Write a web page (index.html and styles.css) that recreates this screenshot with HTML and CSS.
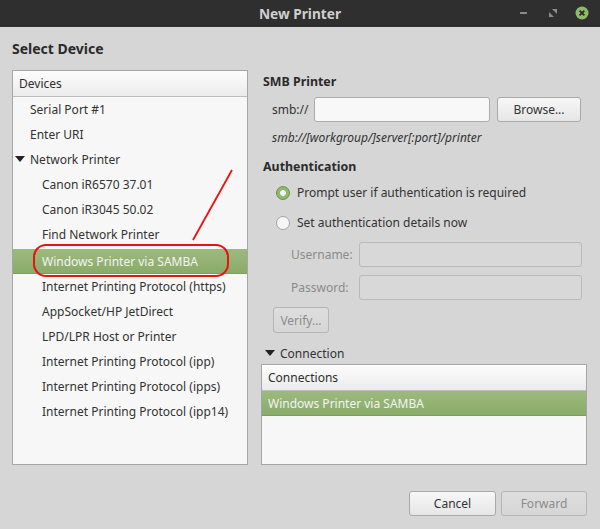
FILE: index.html
```html
<!DOCTYPE html>
<html lang="en">
  <head>
    <meta charset="UTF-8" />
    <title>New Printer</title>
    <link rel="stylesheet" href="styles.css">
  </head>
  <body>
    <div class="window">
      <div class="titlebar">
        <span class="title">New Printer</span>
        <div class="controls">
          <svg class="btn-min" width="10" height="10" viewBox="0 0 10 10">
            <rect x="1" y="4" width="7" height="2" fill="#8a8a8a" />
          </svg>
          <svg class="btn-max" width="10" height="10" viewBox="0 0 10 10">
            <polygon points="4,1 9,1 9,6" fill="#8a8a8a" />
            <polygon points="1,4 1,9 6,9" fill="#8a8a8a" />
          </svg>
          <svg class="btn-close" width="14" height="14" viewBox="0 0 14 14">
            <circle cx="7" cy="7" r="6.5" fill="#8fbb69" />
            <path d="M4.6 4.6 L9.4 9.4 M9.4 4.6 L4.6 9.4" stroke="#2b2b2b" stroke-width="1.8" />
          </svg>
        </div>
      </div>

      <div class="content">
        <h1 class="page-title">Select Device</h1>

        <div class="main">
          <div class="devices">
            <div class="list-header">Devices</div>
            <ul class="device-list">
              <li class="item">Serial Port #1</li>
              <li class="item">Enter URI</li>
              <li class="item"><span class="arrow"></span>Network Printer</li>
              <li class="item child">Canon iR6570 37.01</li>
              <li class="item child">Canon iR3045 50.02</li>
              <li class="item child find">Find Network Printer</li>
              <li class="item child selected">Windows Printer via SAMBA</li>
              <li class="item child">Internet Printing Protocol (https)</li>
              <li class="item child">AppSocket/HP JetDirect</li>
              <li class="item child">LPD/LPR Host or Printer</li>
              <li class="item child">Internet Printing Protocol (ipp)</li>
              <li class="item child">Internet Printing Protocol (ipps)</li>
              <li class="item child">Internet Printing Protocol (ipp14)</li>
            </ul>
            <!-- annotation drawn over the list -->
            <div class="mark-ring"></div>
            <svg class="mark-line" width="236" height="395">
              <line x1="220" y1="100" x2="181" y2="170" stroke="#ee1111" stroke-width="1.8" />
            </svg>
          </div>

          <div class="details">
            <h2 class="section">SMB Printer</h2>
            <div class="smb-row">
              <span class="smb-label">smb://</span>
              <input type="text" class="entry smb-entry" />
              <button class="btn browse">Browse...</button>
            </div>
            <p class="hint">smb://[workgroup/]server[:port]/printer</p>

            <h2 class="section auth">Authentication</h2>
            <label class="radio first"><span class="dot checked"></span>Prompt user if authentication is required</label>
            <label class="radio second"><span class="dot"></span>Set authentication details now</label>

            <div class="field user">
              <span class="field-label">Username:</span>
              <input type="text" class="entry disabled" disabled />
            </div>
            <div class="field pass">
              <span class="field-label">Password:</span>
              <input type="password" class="entry disabled" disabled />
            </div>
            <button class="btn verify" disabled>Verify...</button>

            <div class="expander"><span class="arrow"></span>Connection</div>
            <div class="connections">
              <div class="list-header">Connections</div>
              <div class="item selected conn">Windows Printer via SAMBA</div>
            </div>
          </div>
        </div>

        <div class="footer">
          <button class="btn cancel">Cancel</button>
          <button class="btn forward" disabled>Forward</button>
        </div>
      </div>
    </div>
  </body>
</html>
```

FILE: styles.css
```css
* {
  margin: 0;
  padding: 0;
  box-sizing: border-box;
}
body {
  font-family: "Noto Sans", "DejaVu Sans", sans-serif;
  font-size: 12px;
  color: #333;
  background-color: #d6d6d6;
}
.window {
  width: 600px;
  height: 529px;
  background-color: #d6d6d6;
}
.titlebar {
  height: 27px;
  background-color: #2f2f2f;
  display: flex;
  align-items: center;
  justify-content: center;
  position: relative;
}
.title {
  color: #cfcfcf;
  font-weight: 700;
  font-size: 13.7px;
}
.controls {
  position: absolute;
  right: 11px;
  top: 6px;
  display: flex;
  align-items: center;
}
.btn-min {
  margin-right: 19px;
}
.btn-max {
  margin-right: 17px;
}

.content {
  padding: 0 13px 0 12px;
}
.page-title {
  font-size: 14px;
  font-weight: 700;
  line-height: 20px;
  color: #2b2b2b;
  margin-top: 12px;
  margin-bottom: 11px;
}
.main {
  display: flex;
  height: 395px;
  gap: 13px;
}

/* device list */
.devices {
  width: 236px;
  height: 395px;
  border: 1px solid #a6a6a6;
  background-color: #f7f7f7;
  position: relative;
}
.list-header {
  height: 26px;
  line-height: 25px;
  padding-left: 6px;
  background: linear-gradient(#fdfdfd, #ebebeb);
  border-bottom: 1px solid #bdbdbd;
  color: #2e2e2e;
}
.device-list {
  list-style: none;
}
.item {
  height: 25px;
  line-height: 25px;
  padding-left: 17px;
  color: #333;
  white-space: nowrap;
}
.item.child {
  padding-left: 29px;
}
.item.find {
  height: 27px;
}
.item.selected {
  background: linear-gradient(#9cba7d, #8aab69);
  border-bottom: 1px solid #7f9e60;
  color: #f3f3f3;
}
.arrow {
  display: inline-block;
  width: 0;
  height: 0;
  border-left: 5px solid transparent;
  border-right: 5px solid transparent;
  border-top: 6px solid #222;
  margin-left: -15px;
  margin-right: 5px;
  vertical-align: 2px;
}
.mark-ring {
  position: absolute;
  left: 20px;
  top: 173px;
  width: 196px;
  height: 33px;
  border: 2px solid #e81313;
  border-radius: 13px;
}
.mark-line {
  position: absolute;
  left: -1px;
  top: -1px;
}

/* right side */
.details {
  width: 326px;
  display: flex;
  flex-direction: column;
}
.section {
  font-size: 12.4px;
  font-weight: 700;
  line-height: 20px;
  color: #2b2b2b;
  margin-top: 2px;
  margin-left: 2px;
}
.section.auth {
  margin-top: 9px;
}
.smb-row {
  display: flex;
  align-items: center;
  margin-top: 5px;
  margin-left: 11px;
}
.smb-label {
  width: 42px;
}
.entry {
  height: 25px;
  border: 1px solid #ababab;
  border-radius: 3px;
  background-color: #f8f8f8;
  font-family: inherit;
  font-size: 12px;
}
.smb-entry {
  width: 176px;
}
.entry.disabled {
  background-color: #d8d8d8;
  border-color: #b9b9b9;
  width: 223px;
}
.btn {
  height: 25px;
  font-family: inherit;
  font-size: 12px;
  color: #333;
  background: linear-gradient(#f7f7f7, #e6e6e6);
  border: 1px solid #a9a9a9;
  border-radius: 3px;
}
.btn:disabled {
  color: #8c8c8c;
  background: linear-gradient(#dedede, #d6d6d6);
  border-color: #b5b5b5;
}
.browse {
  width: 84px;
  margin-left: 7px;
}
.hint {
  font-style: italic;
  line-height: 20px;
  margin-top: 6px;
  margin-left: 11px;
}
.radio {
  display: flex;
  align-items: center;
  line-height: 20px;
  margin-left: 15px;
}
.radio.first {
  margin-top: 6px;
}
.radio.second {
  margin-top: 10px;
}
.dot {
  width: 14px;
  height: 14px;
  border-radius: 50%;
  border: 1px solid #a3a3a3;
  background-color: #f6f6f6;
  margin-right: 7px;
}
.dot.checked {
  background: radial-gradient(circle, #f4f4f4 0 2.6px, #8fb96c 3.2px);
  border-color: #6f8e55;
}
.field {
  display: flex;
  align-items: center;
  margin-left: 30px;
}
.field.user {
  margin-top: 9px;
}
.field.pass {
  margin-top: 8px;
}
.field-label {
  width: 68px;
  color: #8b8b8b;
}
.verify {
  width: 56px;
  height: 26px;
  margin-top: 7px;
  margin-left: 12px;
}
.expander {
  line-height: 20px;
  margin-top: 11px;
  padding-left: 18px;
}
.expander .arrow {
  margin-left: -14px;
}
.connections {
  flex: 1;
  border: 1px solid #a6a6a6;
  background-color: #f7f7f7;
}
.item.conn {
  padding-left: 6px;
}

.footer {
  display: flex;
  justify-content: flex-end;
  gap: 5px;
  margin-top: 26px;
}
.cancel {
  width: 87px;
}
.forward {
  width: 86px;
}
```
